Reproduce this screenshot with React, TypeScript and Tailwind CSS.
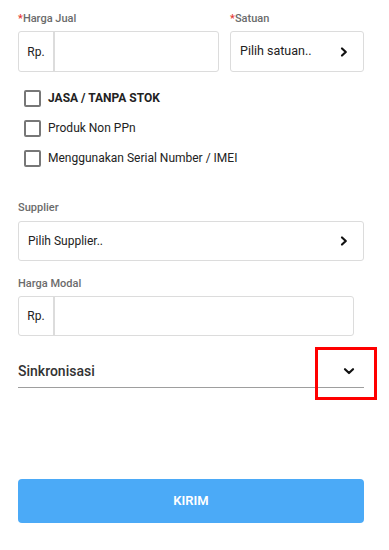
import React from 'react';

const ChevronRight = () => (
    <svg width="12" height="12" viewBox="0 0 12 12" fill="none" stroke="#111" strokeWidth={2.2} strokeLinecap="round" strokeLinejoin="round">
        <path d="M4 2.5l3.8 3.5L4 9.5" />
    </svg>
);

const ChevronDown = () => (
    <svg width="14" height="12" viewBox="0 0 14 12" fill="none" stroke="#111" strokeWidth={2.2} strokeLinecap="round" strokeLinejoin="round">
        <path d="M3 4.2l4 3.8 4-3.8" />
    </svg>
);

const Label = ({ text, required }: { text: string; required?: boolean }) => (
    <div className="h-[14px] text-[11px] leading-[14px] font-medium text-[#6b6b6b]">
        {required && <span className="text-[#e53935]">*</span>}
        {text}
    </div>
);

const RpInput = ({ className }: { className: string }) => (
    <div className={`flex border border-[#dcdcdc] rounded-[3px] bg-white ${className}`}>
        <div className="w-[36px] flex items-center justify-center border-r-2 border-[#dcdcdc] text-[12px] text-[#222]">Rp.</div>
        <div className="flex-1" />
    </div>
);

const Check = ({ text, bold }: { text: string; bold?: boolean }) => (
    <div className="h-[30px] flex items-center pl-[6px]">
        <div className="w-[17px] h-[17px] border-2 border-[#777] rounded-[2px]" />
        <span className={`ml-[7px] text-[12px] text-[#222] ${bold ? 'font-bold' : ''}`}>{text}</span>
    </div>
);

export default function App() {
    return (
        <div className="w-[389px] h-[550px] bg-white overflow-hidden font-['Roboto',sans-serif]">
            <div className="pl-[18px] pr-[25px] pt-[12px]">
                {/* Harga Jual / Satuan */}
                <div className="flex gap-[11px]">
                    <div className="w-[201px]">
                        <Label text="Harga Jual" required />
                        <RpInput className="mt-[5px] h-[41px]" />
                    </div>
                    <div className="flex-1">
                        <Label text="Satuan" required />
                        <div className="mt-[5px] h-[41px] flex items-center justify-between pl-[9px] pr-[13px] border border-[#dcdcdc] rounded-[3px] text-[12.5px] text-[#222]">
                            <span>Pilih satuan..</span>
                            <ChevronRight />
                        </div>
                    </div>
                </div>

                {/* Options */}
                <div className="mt-[11px]">
                    <Check text="JASA / TANPA STOK" bold />
                    <Check text="Produk Non PPn" />
                    <Check text="Menggunakan Serial Number / IMEI" />
                </div>

                {/* Supplier */}
                <div className="mt-[28px]">
                    <Label text="Supplier" />
                    <div className="mt-[6px] h-[40px] flex items-center justify-between pl-[9px] pr-[13px] border border-[#dcdcdc] rounded-[3px] text-[12px] text-[#222]">
                        <span>Pilih Supplier..</span>
                        <ChevronRight />
                    </div>
                </div>

                {/* Harga Modal */}
                <div className="mt-[16px]">
                    <Label text="Harga Modal" />
                    <RpInput className="mt-[5px] h-[40px] w-[336px]" />
                </div>

                {/* Sinkronisasi */}
                <div className="relative mt-[19px] h-[33px] flex items-center justify-between border-b border-[#9e9e9e]">
                    <span className="text-[14px] font-medium text-[#333]">Sinkronisasi</span>
                    <div className="mr-[8px]"><ChevronDown /></div>
                    <div className="absolute left-[297px] top-[-8px] w-[62px] h-[53px] border-[3px] border-[#ff0000]" />
                </div>

                {/* Submit */}
                <button className="mt-[91px] w-full h-[44px] rounded-[4px] bg-[#4baaf7] text-white text-[13px] font-semibold">
                    KIRIM
                </button>
            </div>
        </div>
    );
}
